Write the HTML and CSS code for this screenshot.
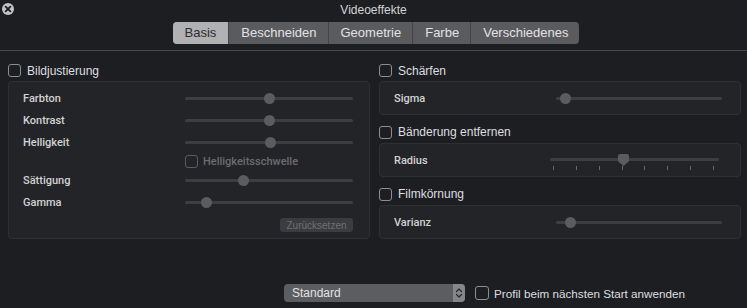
FILE: index.html
```html
<!DOCTYPE html>
<html lang="de">
<head>
    <meta charset="UTF-8">
    <title>Videoeffekte</title>
    <link rel="stylesheet" href="styles.css">
</head>
<body>
    <div class="window">
        <div class="titlebar">
            <span class="close">
                <svg width="12" height="12" viewBox="0 0 12 12">
                    <circle cx="6" cy="6" r="6" fill="#c4c4c6"/>
                    <path d="M3.6 3.6 L8.4 8.4 M8.4 3.6 L3.6 8.4" stroke="#1d1e21" stroke-width="1.8" stroke-linecap="round"/>
                </svg>
            </span>
            <span class="title">Videoeffekte</span>
        </div>

        <div class="tabs">
            <ul class="segmented">
                <li class="active">Basis</li>
                <li>Beschneiden</li>
                <li>Geometrie</li>
                <li>Farbe</li>
                <li>Verschiedenes</li>
            </ul>
        </div>

        <div class="content">
            <div class="column">
                <label class="check-title"><span class="box"></span>Bildjustierung</label>
                <div class="panel panel-big">
                    <div class="row">
                        <span class="label">Farbton</span>
                        <div class="slider"><span class="knob" style="left:50%"></span></div>
                    </div>
                    <div class="row">
                        <span class="label">Kontrast</span>
                        <div class="slider"><span class="knob" style="left:50%"></span></div>
                    </div>
                    <div class="row">
                        <span class="label">Helligkeit</span>
                        <div class="slider"><span class="knob" style="left:50.6%"></span></div>
                    </div>
                    <div class="row row-check">
                        <label class="check-dim"><span class="box"></span>Helligkeitsschwelle</label>
                    </div>
                    <div class="row">
                        <span class="label">Sättigung</span>
                        <div class="slider"><span class="knob" style="left:34.5%"></span></div>
                    </div>
                    <div class="row">
                        <span class="label">Gamma</span>
                        <div class="slider"><span class="knob" style="left:12.5%"></span></div>
                    </div>
                    <div class="row-button">
                        <button class="reset">Zurücksetzen</button>
                    </div>
                </div>
            </div>

            <div class="column">
                <label class="check-title"><span class="box"></span>Schärfen</label>
                <div class="panel">
                    <div class="row">
                        <span class="label">Sigma</span>
                        <div class="slider"><span class="knob" style="left:5.4%"></span></div>
                    </div>
                </div>

                <label class="check-title"><span class="box"></span>Bänderung entfernen</label>
                <div class="panel">
                    <div class="row">
                        <span class="label">Radius</span>
                        <div class="slider slider-ticks">
                            <span class="pointer" style="left:43.2%"></span>
                            <div class="ticks">
                                <i></i><i></i><i></i><i></i><i></i><i></i><i></i><i></i>
                            </div>
                        </div>
                    </div>
                </div>

                <label class="check-title"><span class="box"></span>Filmkörnung</label>
                <div class="panel">
                    <div class="row">
                        <span class="label">Varianz</span>
                        <div class="slider"><span class="knob" style="left:8.3%"></span></div>
                    </div>
                </div>
            </div>
        </div>

        <div class="bottom">
            <div class="popup">
                <span class="popup-text">Standard</span>
                <span class="stepper">
                    <svg width="8" height="12" viewBox="0 0 8 12">
                        <path d="M1.5 4.5 L4 2 L6.5 4.5 M1.5 7.5 L4 10 L6.5 7.5" fill="none" stroke="#2a2b2e" stroke-width="1.3" stroke-linecap="round" stroke-linejoin="round"/>
                    </svg>
                </span>
            </div>
            <label class="check-title check-bottom"><span class="box"></span>Profil beim nächsten Start anwenden</label>
        </div>
    </div>
</body>
</html>
```

FILE: styles.css
```css
*{
    padding:0;
    margin:0;
    box-sizing:border-box;
}
body{
    width:747px;
    height:308px;
    overflow:hidden;
    background:#1d1e21;
    font-family:"Liberation Sans", Arial, sans-serif;
    color:#dcdcde;
}
.window{
    height:308px;
    display:flex;
    flex-direction:column;
}
.titlebar{
    height:19px;
    position:relative;
    display:flex;
    align-items:center;
    justify-content:center;
}
.close{
    position:absolute;
    left:2px;
    top:3px;
    width:12px;
    height:12px;
}
.close svg{
    display:block;
}
.title{
    font-size:12px;
    color:#d4d4d6;
    padding-top:1px;
}
.tabs{
    display:flex;
    justify-content:center;
    padding:3px 0 0 5px;
    height:32px;
    border-bottom:1px solid #48494c;
}
.segmented{
    list-style:none;
    display:flex;
    height:22px;
    border-radius:4px;
    overflow:hidden;
    background:#5a5b5e;
}
.segmented li{
    font-size:13px;
    line-height:22px;
    padding:0 11px 0 12px;
    color:#e2e2e4;
    border-left:1px solid #434447;
}
.segmented li:first-child{
    border-left:none;
}
.segmented .active{
    background:#b1b1b4;
    color:#2b2b2d;
    padding:0 12px;
}
.content{
    display:flex;
    gap:9px;
    padding:0 6px 0 8px;
}
.column{
    width:362px;
    display:flex;
    flex-direction:column;
}
.check-title{
    display:flex;
    align-items:center;
    height:30px;
    font-size:12px;
    color:#dedee0;
    padding-top:9px;
}
.panel + .check-title{
    height:28px;
    padding-top:6px;
}
.box{
    width:13px;
    height:13px;
    border:1px solid #8e8e91;
    border-radius:3px;
    margin-right:6px;
    flex-shrink:0;
}
.panel{
    background:#232427;
    border:1px solid #2f3033;
    border-radius:4px;
    height:34px;
    display:flex;
    flex-direction:column;
    justify-content:center;
    padding:0 18px 0 14px;
}
.panel-big{
    height:158px;
    justify-content:flex-start;
    padding:5px 16px 0 14px;
}
.row{
    display:flex;
    align-items:center;
    height:22px;
}
.row-check{
    height:16px;
    padding-left:162px;
}
.label{
    font-family:Roboto, "Liberation Sans", sans-serif;
    font-size:11px;
    font-weight:500;
    color:#d2d2d4;
    width:162px;
    flex-shrink:0;
}
.slider{
    position:relative;
    width:168px;
    height:11px;
}
.slider::before{
    content:"";
    position:absolute;
    left:0;
    right:0;
    top:4px;
    height:3px;
    border-radius:2px;
    background:#3d3e41;
}
.knob{
    position:absolute;
    top:0;
    width:11px;
    height:11px;
    margin-left:-5px;
    border-radius:50%;
    background:#5b5c5f;
}
.check-dim{
    display:flex;
    align-items:center;
    font-family:Roboto, "Liberation Sans", sans-serif;
    font-size:11px;
    font-weight:500;
    color:#6c6c70;
}
.check-dim .box{
    border-color:#5b5b5f;
    margin-right:5px;
}
.row-button{
    display:flex;
    justify-content:flex-end;
    margin-top:5px;
}
.reset{
    font-family:"Liberation Sans", Arial, sans-serif;
    font-size:10px;
    color:#6f6f73;
    background:#3b3c3f;
    border:none;
    border-radius:3px;
    width:73px;
    height:14px;
}
.slider-ticks{
    width:169px;
    height:22px;
    margin-left:-6px;
}
.slider-ticks::before{
    top:9px;
}
.pointer{
    position:absolute;
    top:5px;
    width:11px;
    height:12px;
    margin-left:-5px;
    background:#5b5c5f;
    clip-path:polygon(0 0, 100% 0, 100% 60%, 50% 100%, 0 60%);
    border-radius:2px 2px 0 0;
}
.ticks{
    position:absolute;
    left:3px;
    right:5px;
    top:17px;
    display:flex;
    justify-content:space-between;
}
.ticks i{
    width:1px;
    height:4px;
    background:#6a6a6e;
}
.bottom{
    margin-top:auto;
    height:24px;
    display:flex;
    align-items:flex-start;
    padding:0 0 0 284px;
}
.popup{
    width:181px;
    height:18px;
    border-radius:4px;
    background:#5c5d60;
    display:flex;
    align-items:center;
    overflow:hidden;
}
.popup-text{
    flex:1;
    font-size:12px;
    color:#e2e2e4;
    padding-left:8px;
}
.stepper{
    width:12px;
    height:18px;
    background:#858689;
    display:flex;
    align-items:center;
    justify-content:center;
}
.stepper svg{
    display:block;
}
.check-bottom{
    height:18px;
    padding-top:0;
    margin-left:10px;
    font-size:11.7px;
}
.check-bottom .box{
    width:14px;
    height:14px;
    margin-right:5px;
}
```
